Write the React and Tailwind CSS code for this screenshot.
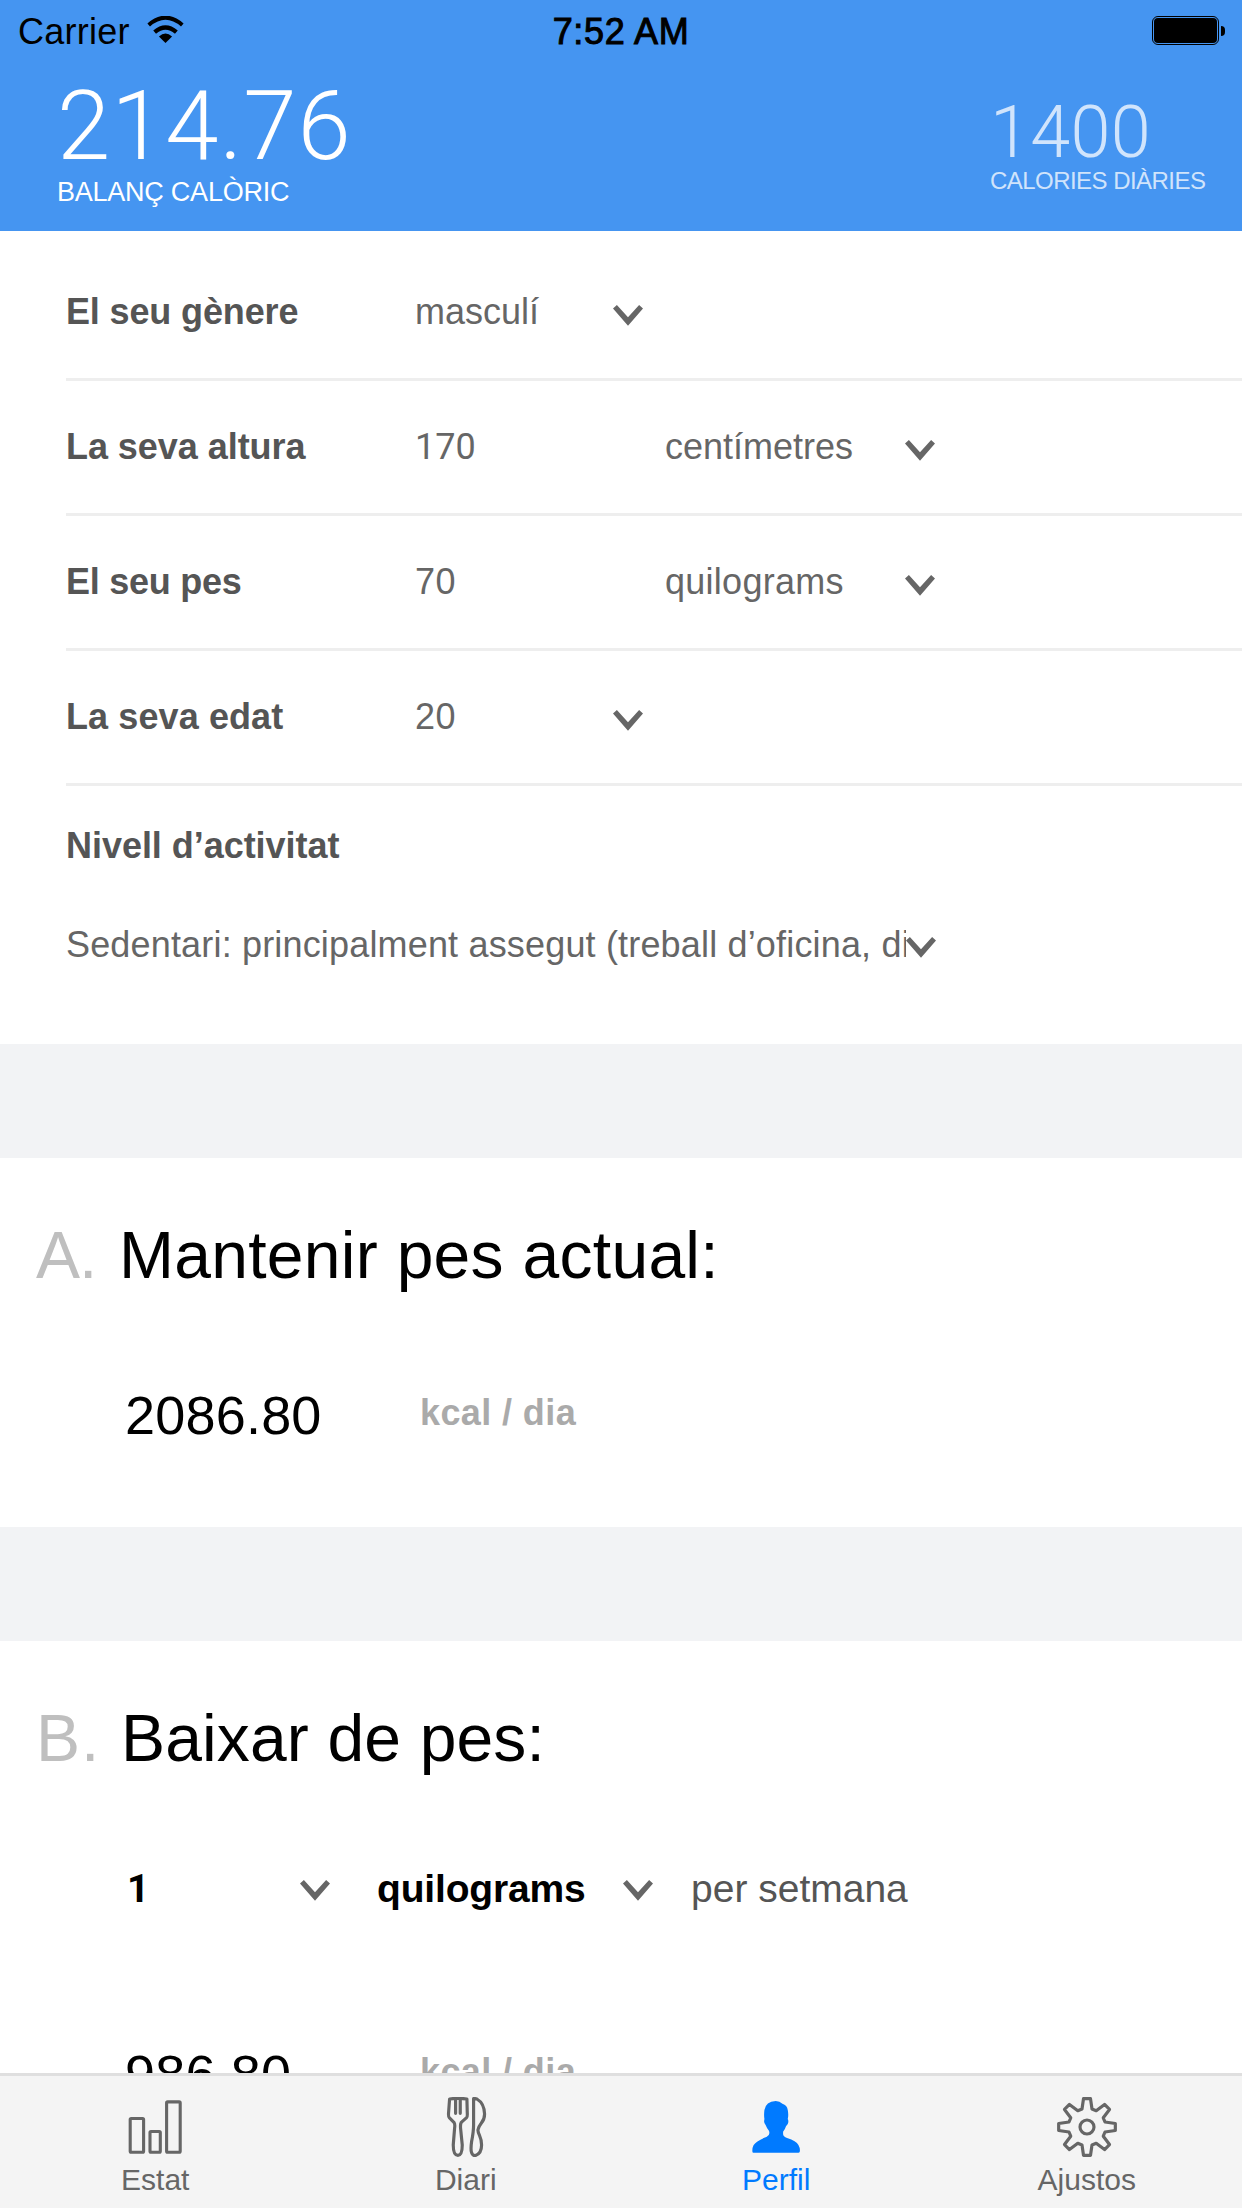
import React from "react";

function Chevron({ className = "" }) {
  return (
    <svg className={`h-[21px] w-[30px] shrink-0 fill-[#666] ${className}`} viewBox="0 0 30 21">
      <path d="M0 3.4 3.9 0 15 12.2 26.1 0 30 3.4 15 20.8Z" />
    </svg>
  );
}

function WifiIcon() {
  return (
    <svg className="mt-4 h-[27px] w-[37px] fill-none stroke-black" viewBox="442 48 110 82">
      <path d="M446 75Q497 31 548 75" strokeWidth="12" />
      <path d="M464 97Q497 69 530 97" strokeWidth="13" />
      <path d="M477 110Q497 93 517 110L497 130Z" className="fill-black stroke-none" />
    </svg>
  );
}

function StatIcon() {
  return (
    <svg className="h-[60px] w-[60px] fill-none stroke-[#666]" viewBox="0 0 60 60" strokeWidth="3.1">
      <rect x="5.2" y="21.5" width="13.4" height="33.8" rx="1" />
      <rect x="25" y="34.5" width="10.3" height="20.8" rx="1" />
      <rect x="41.6" y="4.9" width="13.6" height="50.4" rx="1" />
    </svg>
  );
}

function DiaryIcon() {
  return (
    <svg className="h-[60px] w-[60px] fill-none stroke-[#666]" viewBox="107.25 141 180 180" strokeWidth="9.5" strokeLinejoin="round">
      <path d="M148 147Q173 143 200 147L201 187Q202 200 199 203L183 217Q180 222 181 235L186 285Q186 316 173 316 159 316 159 285L163 235Q165 222 161 217L147 203Q144 200 145 188Z" />
      <path d="M166 147V190M180 147V190" strokeLinecap="round" />
      <path d="M220 146V225Q220 245 214 275 208 316 224 317 244 312 244 285 244 270 238 257 233 246 233 240 235 230 243 220 253 208 253 192 252 160 230 147Q225 145 220 146Z" />
    </svg>
  );
}

function ProfileIcon() {
  return (
    <svg className="h-[60px] w-[60px] fill-[#007aff]" viewBox="138.75 141 180 180">
      <path d="M158 305Q156 285 172 275 185 266 200 261 209 257 209 249L208 243Q201 235 198 226 193 221 193 214L194 207Q192 195 194 180 198 155 228 153 240 153 248 161 262 165 264 180 267 195 264 207 267 212 265 220 262 226 259 228 256 238 250 245L250 252Q250 260 262 264 290 273 296 285 302 296 300 305 299 308 296 308L161 308Q158 308 158 305Z" />
    </svg>
  );
}

const TOOTH = [[-15, -54], [-10.5, -85], [10.5, -85], [15, -54]];
const GEAR = Array.from({ length: 8 }, (_, k) => {
  const a = (k * Math.PI) / 4;
  return TOOTH.map(([x, y]) =>
    [x * Math.cos(a) - y * Math.sin(a), x * Math.sin(a) + y * Math.cos(a)].map((v) => v.toFixed(2)).join(",")
  );
}).flat().join(" ");

function GearIcon() {
  return (
    <svg className="h-[60px] w-[60px] fill-none stroke-[#666]" viewBox="-90 -90 180 180" strokeWidth="9.5" strokeLinejoin="round">
      <polygon points={GEAR} />
      <circle r="21" />
    </svg>
  );
}

function FieldRow({ label, labelClass, value, valueClass = "", unit, unitClass, narrow }) {
  return (
    <div className="ml-[66px] grid h-[135px] grid-cols-[349px_198px_52px_240px_30px] border-b-[3px] border-[#eee] text-[36px] leading-[131px] whitespace-nowrap text-[#666]">
      <span className={`font-bold text-[#555] ${labelClass}`}>{label}</span>
      <span className={valueClass}>{value}</span>
      {narrow ? <Chevron className="mt-[59px]" /> : <span />}
      <span className={unitClass}>{unit}</span>
      {narrow ? <span /> : <Chevron className="mt-[59px]" />}
    </div>
  );
}

function Title({ letter, letterClass, children }) {
  return (
    <h2 className="flex h-[74px] text-[66px] leading-[74px] font-normal whitespace-nowrap">
      <span className={`w-[85px] shrink-0 text-[#bfbfbf] ${letterClass}`}>{letter}</span>
      {children}
    </h2>
  );
}

function Result({ value, valueClass }) {
  return (
    <div className="flex pl-[125px] whitespace-nowrap">
      <span className={`w-[295px] text-[54px] leading-[60px] ${valueClass}`}>{value}</span>
      <span className="mt-[7px] text-[36px] leading-[41px] font-bold tracking-[0.4px] text-[#aaa]">kcal / dia</span>
    </div>
  );
}

function Tab({ icon, label, active }) {
  return (
    <div className="flex flex-1 flex-col items-center pt-[21px]">
      {icon}
      <span className={`mt-[6px] text-[30px] leading-[33px] ${active ? "text-[#007aff]" : "text-[#666]"}`}>{label}</span>
    </div>
  );
}

export default function App() {
  return (
    <div className="flex h-[2208px] w-[1242px] flex-col overflow-hidden bg-white font-['Liberation_Sans',Arial,sans-serif] text-black">
      <header className="h-[231px] shrink-0 bg-[#4595f1]">
        <div className="grid h-[63px] grid-cols-3 text-[36px] leading-[63px]">
          <div className="flex gap-[17px] pl-[18px]">
            <span className="tracking-[0.25px]">Carrier</span>
            <WifiIcon />
          </div>
          <span className="text-center tracking-[0.65px] [-webkit-text-stroke:1px_#000]">7:52 AM</span>
          <div className="flex justify-end gap-[2px] pt-4 pr-[17px]">
            <div className="h-[29px] w-[67px] rounded-[6px] border border-black p-px">
              <div className="h-full rounded-[4px] bg-black" />
            </div>
            <div className="mt-[10px] h-[10px] w-1 rounded-r-full bg-black" />
          </div>
        </div>
        <div className="flex justify-between whitespace-nowrap text-white">
          <div className="pt-[16px] pl-[57px]">
            <div className="font-['Roboto'] text-[96px] leading-[95px] font-light tracking-[0.9px]">214.76</div>
            <div className="text-[27px] leading-[36px] tracking-[-0.24px]">BALANÇ CALÒRIC</div>
          </div>
          <div className="w-[252px] pt-[34px] text-white/75">
            <div className="font-['Roboto'] text-[72px] leading-[71px] font-light tracking-[0.3px]">1400</div>
            <div className="text-[24px] leading-[26px] tracking-[-0.54px]">CALORIES DIÀRIES</div>
          </div>
        </div>
      </header>

      <section className="h-[813px] shrink-0 pt-[15px]">
        <FieldRow label="El seu gènere" labelClass="tracking-[-0.14px]" value="masculí" narrow />
        <FieldRow label="La seva altura" labelClass="tracking-[-0.05px]" value="170" valueClass="font-['Roboto'] leading-[133px]" unit="centímetres" />
        <FieldRow label="El seu pes" labelClass="tracking-[-0.25px]" value="70" valueClass="tracking-[0.6px]" unit="quilograms" unitClass="tracking-[0.27px]" />
        <FieldRow label="La seva edat" labelClass="tracking-[0.1px]" value="20" valueClass="tracking-[0.5px]" narrow />
        <h3 className="mt-[29px] ml-[66px] text-[36px] leading-[61px] font-bold tracking-[-0.04px] text-[#555]">Nivell d’activitat</h3>
        <div className="mt-[38px] ml-[66px] flex">
          <div className="w-[840px] overflow-hidden text-[36px] leading-[61px] tracking-[0.17px] whitespace-nowrap text-[#666]">
            Sedentari: principalment assegut (treball d’oficina, di
          </div>
          <Chevron className="mt-[23px]" />
        </div>
      </section>

      <div className="h-[114px] shrink-0 bg-[#f2f3f5]" />

      <section className="h-[369px] shrink-0 pt-[60px]">
        <div className="pl-[36px]">
          <Title letter="A." letterClass="-mr-[2px] tracking-[-1px]">
            <span className="tracking-[0.28px]">Mantenir pes actual:</span>
          </Title>
        </div>
        <div className="mt-[93px]">
          <Result value="2086.80" valueClass="tracking-[0.2px]" />
        </div>
      </section>

      <div className="h-[114px] shrink-0 bg-[#f2f3f5]" />

      <section className="h-[432px] shrink-0 overflow-hidden pt-[60px]">
        <div className="pl-[36px]">
          <Title letter="B." letterClass="tracking-[1px]">
            <span className="tracking-[0.15px]">Baixar de pes:</span>
          </Title>
        </div>
        <div className="mt-[92px] grid h-[43px] grid-cols-[173px_77px_246px_68px_auto] pl-[127px] text-[39px] leading-[43px] whitespace-nowrap">
          <span className="font-['Roboto'] leading-[45px] font-bold">1</span>
          <Chevron className="mt-[13px]" />
          <span className="font-bold tracking-[-0.17px]">quilograms</span>
          <Chevron className="mt-[13px]" />
          <span className="text-[#555]">per setmana</span>
        </div>
        <div className="mt-[134px]">
          <Result value="986.80" valueClass="tracking-[0.17px]" />
        </div>
      </section>

      <nav className="flex h-[135px] shrink-0 border-t-[3px] border-[#dfdfdf] bg-[#f4f4f4]">
        <Tab icon={<StatIcon />} label="Estat" />
        <Tab icon={<DiaryIcon />} label="Diari" />
        <Tab icon={<ProfileIcon />} label="Perfil" active />
        <Tab icon={<GearIcon />} label="Ajustos" />
      </nav>
    </div>
  );
}
